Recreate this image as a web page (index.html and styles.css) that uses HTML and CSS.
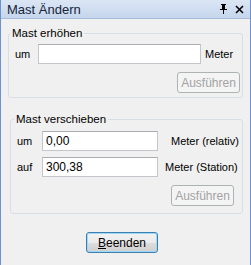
FILE: index.html
```html
<!DOCTYPE html>
<html lang="de">
<head>
    <meta charset="UTF-8">
    <title>Mast Ändern</title>
    <link rel="stylesheet" href="styles.css">
</head>
<body>
    <div class="window">
        <div class="titlebar">
            <span class="title">Mast Ändern</span>
            <span class="tools">
                <svg class="pin" width="9" height="10" viewBox="0 0 9 10">
                    <path d="M2 0h5v1H6v4h2v1H5v4H4V6H1V5h2V1H2z" fill="#000"/>
                    <path d="M5 1h1v4H5z" fill="#000"/>
                </svg>
                <svg class="close" width="9" height="9" viewBox="0 0 9 9">
                    <path d="M1 1l7 7M8 1L1 8" stroke="#000" stroke-width="1.6"/>
                </svg>
            </span>
        </div>

        <div class="content">
            <div class="group group-raise">
                <span class="group-title">Mast erhöhen</span>
                <div class="row">
                    <span class="label">um</span>
                    <input type="text" class="field field-wide" value="">
                    <span class="unit">Meter</span>
                </div>
                <div class="actions">
                    <button class="btn" disabled>Ausführen</button>
                </div>
            </div>

            <div class="group group-move">
                <span class="group-title">Mast verschieben</span>
                <div class="row">
                    <span class="label">um</span>
                    <input type="text" class="field" value="0,00">
                    <span class="unit unit-rel">Meter (relativ)</span>
                </div>
                <div class="row row-second">
                    <span class="label">auf</span>
                    <input type="text" class="field" value="300,38">
                    <span class="unit unit-sta">Meter (Station)</span>
                </div>
                <div class="actions">
                    <button class="btn" disabled>Ausführen</button>
                </div>
            </div>

            <div class="footer">
                <button class="btn btn-default"><u>B</u>eenden</button>
            </div>
        </div>
    </div>
</body>
</html>
```

FILE: styles.css
```css
body {
    margin: 0;
    font-family: "Liberation Sans", Arial, sans-serif;
    font-size: 11px;
    color: #000;
    background: #f0f0f0;
}
.window {
    width: 251px;
    height: 265px;
    box-sizing: border-box;
    border-left: 1px solid #6b91d2;
    border-right: 1px solid #6b91d2;
    background: #f0f0f0;
    overflow: hidden;
}
.titlebar {
    height: 18px;
    border-bottom: 1px solid #a7bcdb;
    background: linear-gradient(#dbe6f4, #c5d6ec);
    display: flex;
    align-items: center;
    justify-content: space-between;
    padding: 0 6px 0 6px;
}
.title {
    font-size: 13px;
    color: #16243a;
}
.tools {
    display: flex;
    align-items: center;
    gap: 7px;
}
.content {
    padding: 14px 7px 0 7px;
}
.group {
    position: relative;
    border: 1px solid #d5dfe5;
    border-radius: 3px;
}
.group-title {
    position: absolute;
    top: -7px;
    left: 3px;
    padding: 0 2px;
    background: #f0f0f0;
    line-height: 13px;
    font-size: 11.5px;
    white-space: nowrap;
}
.group-raise .group-title {
    left: 1px;
}
.group-raise {
    padding: 10px 2px 4px 6px;
}
.group-move {
    margin: 21px 0 0 2px;
    padding: 11px 8px 7px 6px;
}
.row {
    display: flex;
    align-items: center;
    height: 20px;
    white-space: nowrap;
}
.row-second {
    margin-top: 6px;
}
.label {
    flex-shrink: 0;
    width: 23px;
}
.group-move .label {
    width: 25px;
}
.field {
    flex-shrink: 0;
    box-sizing: border-box;
    width: 116px;
    height: 20px;
    margin: 0;
    border: 1px solid #c3c7cc;
    border-top-color: #abadb3;
    padding: 0 3px;
    font: inherit;
    font-size: 12px;
    background: #fff;
}
.field-wide {
    width: 163px;
}
.unit {
    flex-shrink: 0;
    margin-left: 4px;
}
.unit-rel {
    margin-left: 13px;
}
.unit-sta {
    margin-left: 7px;
}
.actions {
    display: flex;
    justify-content: flex-end;
    margin-top: 8px;
}
.btn {
    width: 63px;
    height: 21px;
    margin: 0;
    padding: 0;
    font: inherit;
    font-size: 12px;
    border: 1px solid #adb2b5;
    border-radius: 3px;
    background: #f4f4f4;
    color: #a3a3a3;
}
.footer {
    display: flex;
    justify-content: center;
    margin-top: 18px;
    padding-right: 7px;
}
.btn-default {
    width: 72px;
    height: 21px;
    color: #000;
    border: 1px solid #3c7fb1;
    background: linear-gradient(#f2f2f2 0%, #ebebeb 50%, #dddddd 51%, #cfcfcf 100%);
    box-shadow: inset 0 0 0 1px #9fd8f6;
}
```
